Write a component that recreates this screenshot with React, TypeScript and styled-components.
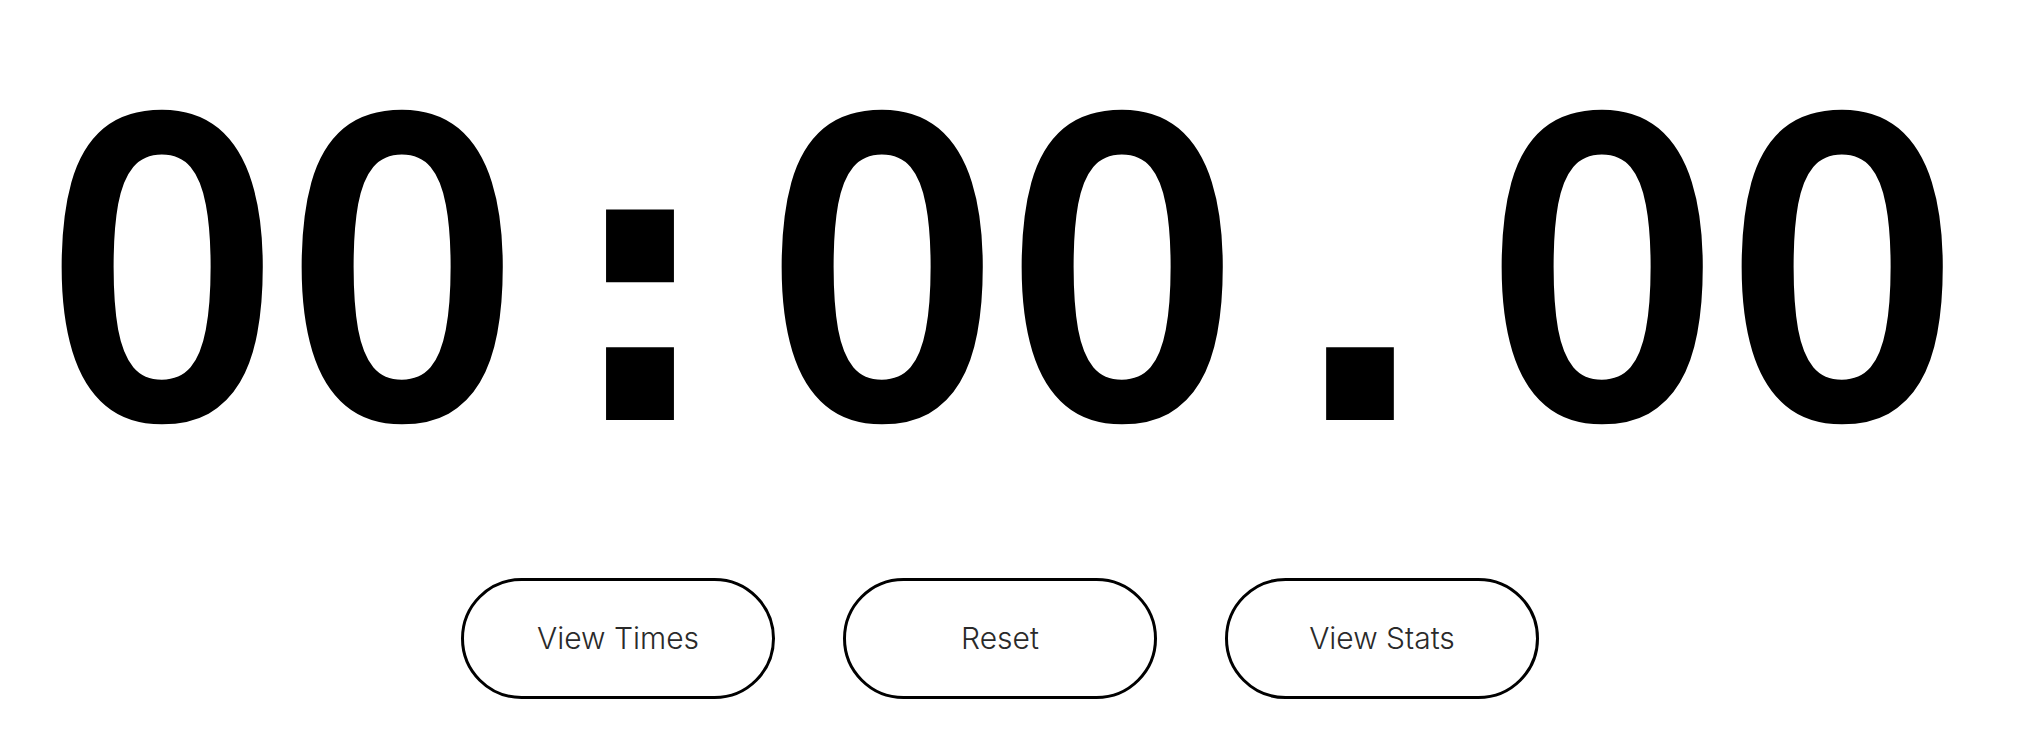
import React from "react";
import styled, { createGlobalStyle } from "styled-components";

const Global = createGlobalStyle`
  html, body { margin: 0; padding: 0; background: #ffffff; }
  body { font-family: "Inter", "Noto Sans", sans-serif; }
`;

const Page = styled.main`
  width: 2000px;
  display: flex;
  flex-direction: column;
  align-items: center;
`;

const Display = styled.div`
  display: flex;
  align-items: baseline;
  margin-top: 19px;
  color: #000;
  line-height: 1.1;
`;

const Cell = styled.span<{ $sep?: boolean }>`
  display: inline-block;
  width: 240px;
  text-align: center;
  font-family: ${(p) => (p.$sep ? '"DejaVu Sans", sans-serif' : '"Noto Sans", "Open Sans", sans-serif')};
  font-weight: ${(p) => (p.$sep ? 700 : 560)};
  font-size: ${(p) => (p.$sep ? "385px" : "428px")};
  transform: ${(p) => (p.$sep ? "none" : "scaleX(0.96)")};
`;

const Actions = styled.div`
  display: flex;
  gap: 68px;
  margin-top: 78px;
`;

const PillButton = styled.button`
  width: 314px;
  height: 121px;
  box-sizing: border-box;
  border: 3px solid #000;
  border-radius: 61px;
  background: #fff;
  color: #2a2a2a;
  font-family: "Inter", "Noto Sans", sans-serif;
  font-weight: 350;
  font-size: 30px;
  cursor: pointer;
`;

const chars = "00:00.00".split("");

export default function App() {
  return (
    <>
      <Global />
      <Page>
        <Display>
          {chars.map((c, i) => (
            <Cell key={i} $sep={c === ":" || c === "."}>
              {c}
            </Cell>
          ))}
        </Display>
        <Actions>
          <PillButton>View Times</PillButton>
          <PillButton>Reset</PillButton>
          <PillButton>View Stats</PillButton>
        </Actions>
      </Page>
    </>
  );
}
